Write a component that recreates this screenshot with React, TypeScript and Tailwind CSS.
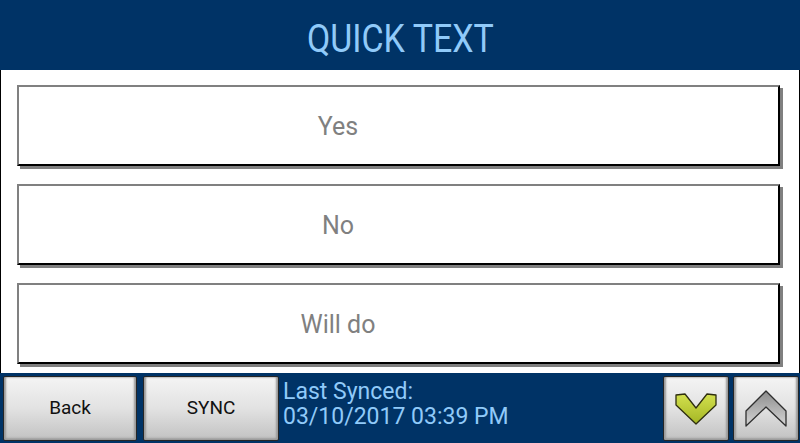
import React from 'react';

const items = ['Yes', 'No', 'Will do'];

const GrayButton = ({ className, children }: { className: string; children?: React.ReactNode }) => (
    <div
        className={
            'h-[65px] flex items-center justify-center border border-[#262626] rounded-[2px] bg-gradient-to-b from-[#f4f4f4] via-[#e2e2e2] to-[#c2c2c2] shadow-[inset_2px_0_2px_#9a9a9a,inset_-2px_0_2px_#9a9a9a,inset_0_-2px_2px_#a0a0a0] ' +
            className
        }
    >
        {children}
    </div>
);

const ChevronDown = () => (
    <svg width="42" height="32" viewBox="0 0 42 32">
        <defs>
            <linearGradient id="gd" x1="0" y1="0" x2="0" y2="1">
                <stop offset="0" stopColor="#d3e04e" />
                <stop offset="1" stopColor="#a4b624" />
            </linearGradient>
        </defs>
        <polygon points="1,2 10,1 21,15 32,1 41,2 41,12 21,31 1,12" fill="url(#gd)" stroke="#2e2e10" strokeWidth="1.3" strokeLinejoin="round" />
    </svg>
);

const ChevronUp = () => (
    <svg width="42" height="38" viewBox="0 0 42 38">
        <defs>
            <linearGradient id="gu" x1="0" y1="0" x2="0" y2="1">
                <stop offset="0" stopColor="#8c8c8c" />
                <stop offset="1" stopColor="#d6d6d6" />
            </linearGradient>
        </defs>
        <polygon points="21,1 41,21 41,36 21,17 1,36 1,21" fill="url(#gu)" stroke="#2e2e2e" strokeWidth="1.3" strokeLinejoin="round" />
    </svg>
);

export default function App() {
    return (
        <div className="w-[800px] h-[443px] flex flex-col overflow-hidden" style={{ fontFamily: 'Roboto, "Liberation Sans", sans-serif' }}>
            <header className="h-[70px] shrink-0 bg-[#003366] flex items-center justify-center">
                <span className="inline-block text-[39px] leading-none text-[#90caf9] scale-x-[0.87] pt-[8px]">QUICK TEXT</span>
            </header>

            <main className="flex-1 bg-white border-x border-black pl-[16px] pr-[19px] pt-[15px] flex flex-col gap-[18px]">
                {items.map((t) => (
                    <div
                        key={t}
                        className="h-[81px] shrink-0 border-2 border-t-[#808080] border-l-[#808080] border-r-black border-b-black shadow-[3px_3px_0_#808080] flex items-center justify-center pr-[121px] pt-[3px]"
                    >
                        <span className="text-[25px] text-[#808080]">{t}</span>
                    </div>
                ))}
            </main>

            <footer className="h-[70px] shrink-0 bg-[#003366] flex items-start pt-[3px] pl-[3px] pr-[1px]">
                <GrayButton className="w-[134px]">
                    <span className="text-[19px] text-[#111]">Back</span>
                </GrayButton>
                <GrayButton className="w-[136px] ml-[6px]">
                    <span className="text-[19px] text-[#111]">SYNC</span>
                </GrayButton>
                <div className="flex-1 ml-[4px] pt-[3px] text-[23px] leading-[25px] text-[#90caf9]">
                    <div>Last Synced:</div>
                    <div>03/10/2017 03:39 PM</div>
                </div>
                <GrayButton className="w-[66px]">
                    <ChevronDown />
                </GrayButton>
                <GrayButton className="w-[66px] ml-[4px]">
                    <ChevronUp />
                </GrayButton>
            </footer>
        </div>
    );
}
